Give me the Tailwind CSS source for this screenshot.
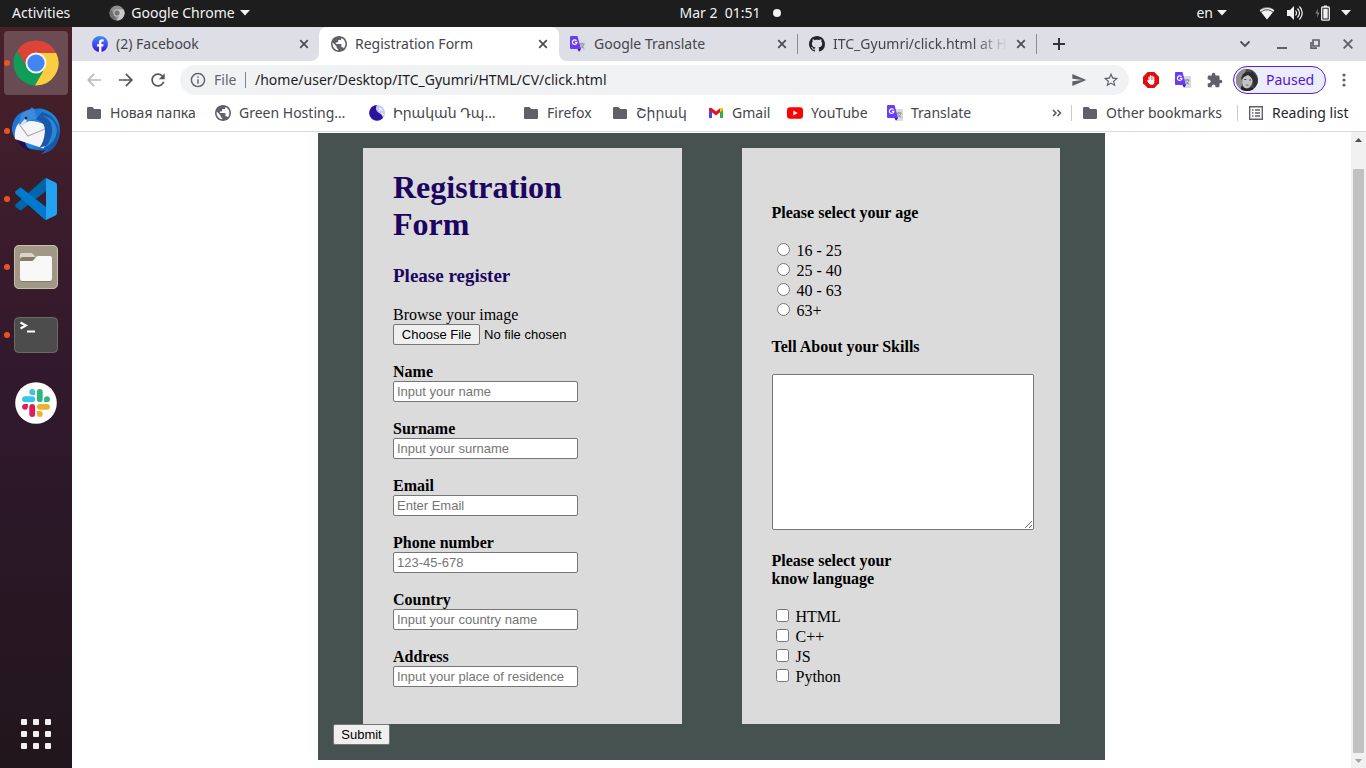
<!DOCTYPE html>
<html lang="en">
<head>
<meta charset="utf-8">
<meta name="viewport" content="width=device-width, initial-scale=1">
<title>Registration Form</title>
<script src="https://cdn.jsdelivr.net/npm/@tailwindcss/browser@4"></script>
</head>
<body class="min-h-screen flex flex-col bg-white font-['Noto_Sans','DejaVu_Sans',sans-serif] text-[14px] leading-5">

<!-- Shared icon shapes -->
<svg class="hidden" aria-hidden="true">
  <symbol id="i-globe" viewBox="2 2 20 20"><path fill="#5f6068" d="M12 2C6.480 2 2 6.480 2 12s4.480 10 10 10 10-4.480 10-10S17.520 2 12 2z"/><path fill="#fff" d="M11 19.930c-3.950-.49-7-3.850-7-7.930 0-.62.08-1.210.21-1.790L9 15v1c0 1.100.9 2 2 2v1.930zm6.900-2.540c-.26-.81-1-1.390-1.900-1.390h-1v-3c0-.55-.45-1-1-1H8v-2h2c.55 0 1-.45 1-1V7h2c1.100 0 2-.9 2-2v-.41c2.930 1.190 5 4.060 5 7.410 0 2.080-.8 3.970-2.100 5.390z"/></symbol>
  <symbol id="i-folder" viewBox="0 0 16 16"><path fill="#5f6068" d="M2.200 2H6.500L8.200 4H13.800A1.200 1.200 0 0 1 15 5.200V12.800A1.200 1.200 0 0 1 13.800 14H2.200A1.200 1.200 0 0 1 1 12.800V3.200A1.200 1.200 0 0 1 2.200 2z"/></symbol>
  <symbol id="i-translate" viewBox="0 0 16 16"><path fill="#d9dbe0" d="M6 4h9a1 1 0 0 1 1 1v10a1 1 0 0 1-1 1H9.500z"/><path d="M9.500 8h5M12 6.800V8M14 8c-.5 2-2 3.500-3.500 4.300M10.500 8.500c.7 1.700 2 3 3.700 3.800" stroke="#858a96" fill="none"/><path fill="#6a3df5" d="M1 0h6.500L11 13H1a1 1 0 0 1-1-1V1a1 1 0 0 1 1-1z"/><path fill="#3d08b8" d="M7.500 13H11l-2 2.800z"/><path d="M6.500 4.700A2.300 2.300 0 1 0 7 6.300H4.900" stroke="#fff" stroke-width="1.200" fill="none"/></symbol>
  <symbol id="i-x" viewBox="0 0 10 10"><path d="M1.200 1.200l7.600 7.600M8.800 1.200L1.200 8.800" stroke="#4b4c52" stroke-width="1.700"/></symbol>
  <symbol id="i-caret" viewBox="0 0 10 6"><path d="M0 0h10L5 5.500z" fill="#f2f2f2"/></symbol>
</svg>

<!-- Desktop top bar -->
<header class="h-[27px] shrink-0 pb-px bg-[#1d1d1d] text-[#f2f2f2] grid grid-cols-[1fr_auto_1fr] items-center">
  <div class="flex items-center pl-3">
    <button class="w-[97px] text-left">Activities</button>
    <button class="flex items-center">
      <svg class="size-4 mr-1.5" viewBox="0 0 16 16"><circle cx="8" cy="8" r="7.500" fill="#8f8f8f"/><path d="M8 4.500h6.700A7.500 7.500 0 0 1 7.600 15.500L11 9.800z" fill="#c9c9c9"/><path d="M1.700 4L5 9.700l2.600 5.800A7.500 7.500 0 0 1 1.700 4z" fill="#6f6f6f"/><circle cx="8" cy="8" r="3.500" fill="#d8d8d8"/><circle cx="8" cy="8" r="2.700" fill="#777"/></svg>
      <span class="min-w-[104px] whitespace-nowrap">Google Chrome</span>
      <svg class="w-2.5 h-1.5 ml-[5px]"><use href="#i-caret"/></svg>
    </button>
  </div>
  <button class="flex items-center gap-3 pl-[94px]"><span class="whitespace-pre min-w-[82px]">Mar 2  01:51</span><span class="size-2 rounded-full bg-[#f2f2f2]"></span></button>
  <div class="flex items-center justify-end pr-[15px]">
    <button class="flex items-center gap-1 mr-8"><span>en</span><svg class="w-2.5 h-1.5"><use href="#i-caret"/></svg></button>
    <button class="flex items-center" aria-label="System menu">
      <svg class="size-4 mr-3" viewBox="0 0 16 16"><path d="M8 14.500L.5 5C4.500 1 11.500 1 15.500 5z" fill="#777"/><path d="M8 14.500L.8 5.500C4.800 2 11.200 2 15.200 5.500z" fill="#f2f2f2"/><path d="M2 7.200c3.500-3.200 8.500-3.200 12 0" stroke="#1d1d1d" stroke-width=".8" fill="none"/></svg>
      <svg class="size-4 mr-3" viewBox="0 0 16 16"><path d="M0 5h3l4-4v14l-4-4H0z" fill="#f2f2f2"/><path d="M8.500 5.500q2 2.500 0 5M10.500 3.500q4 4.500 0 9M12.500 1.500q5.500 6.500 0 13" stroke="#f2f2f2" stroke-width="1.200" fill="none"/></svg>
      <svg class="size-4 mr-2.5" viewBox="0 0 16 16"><path d="M3 3.500L.5 8.500h2L2 13l2.500-5.500h-2z" fill="#888"/><path d="M9 .5h3V2H9z" fill="#f2f2f2"/><rect x="6.700" y="2" width="7.600" height="13.200" rx="1" fill="none" stroke="#f2f2f2" stroke-width="1.300"/><path d="M8.300 3.700h4.400v9.800H8.300z" fill="#f2f2f2"/></svg>
      <svg class="w-2.5 h-1.5"><use href="#i-caret"/></svg>
    </button>
  </div>
</header>

<div class="flex-1 flex min-w-0">

  <!-- Dock -->
  <nav class="w-[72px] shrink-0 bg-linear-to-b from-[#482028] via-[#30182d] to-[#21161b] flex flex-col justify-between pt-1 pb-0.5" aria-label="Dock">
    <div class="flex flex-col gap-1">
      <button aria-label="Google Chrome" class="relative mx-1 h-16 rounded bg-white/20 grid place-items-center">
        <i class="absolute left-0 top-[29px] size-1.5 rounded-full bg-[#e95420]"></i>
        <svg class="size-12" viewBox="0 0 48 48"><path d="M24 13.800H44.060A22.500 22.500 0 0 1 22.800 46.470L32.830 29.100z" fill="#fdcd40"/><path d="M15.170 29.100L5.140 11.730A22.500 22.500 0 0 1 44.060 13.800H24z" fill="#dc4437"/><path d="M32.830 29.100L22.800 46.470A22.500 22.500 0 0 1 5.140 11.730L15.170 29.100z" fill="#109d58"/><circle cx="24" cy="24" r="10.500" fill="#f2f2f2"/><circle cx="24" cy="24" r="8.600" fill="#4285f4"/></svg>
      </button>
      <button aria-label="Thunderbird" class="relative mx-1 h-16 grid place-items-center">
        <i class="absolute left-0 top-[29px] size-1.5 rounded-full bg-[#e95420]"></i>
        <svg class="size-12" viewBox="0 0 48 48"><defs><linearGradient id="tb" x1="0" y1="0" x2="1" y2="1"><stop offset="0" stop-color="#1b6cd1"/><stop offset=".6" stop-color="#1f8ae0"/><stop offset="1" stop-color="#183f9c"/></linearGradient></defs><path d="M10 5L17 3 20 0l2 2c10-3 26 5 26 21 0 12-7 22-19 24l5-4c-9 1-20-1-26-7C3 32 0 28 0 22c0-6 3-12 7-15z" fill="url(#tb)"/><path d="M4 31c3 8 9 12 15 13q-5-4-6-9z" fill="#23104f"/><path d="M7 16L13 15q8-3 21 3l-1 24L3 32C2 25 4 19 7 16z" fill="#f5f5f8"/><path d="M7 17l9 12 17-7" fill="none" stroke="#aaa" stroke-width="1.200"/><path d="M7 17L9 8q4-6 13-6l3 10q-6 0-10 3-4 3-8 2z" fill="#3f8bdb"/><path d="M9 16l4-4 2 2-4 5z" fill="#d5e4ef"/><circle cx="14" cy="11" r="1.300" fill="#16284c"/><path d="M24 12q9 3 9 12-1 12-6 17l6-2-3 5 6-3v4q11-5 11-21Q44 8 30 5z" fill="#1b58aa"/><path d="M30 9q11 3 10 17-2 10-8 15 12-5 13-18Q43 10 30 9z" fill="#2888d4"/></svg>
      </button>
      <button aria-label="Visual Studio Code" class="relative mx-1 h-16 grid place-items-center">
        <i class="absolute left-0 top-[29px] size-1.5 rounded-full bg-[#e95420]"></i>
        <svg class="size-12" viewBox="0 0 48 48"><path d="M34 3v13L9.500 35q-1 .8-2 0L3.700 32q-1.400-1.300 0-2.700L32 4q1-1 2-1z" fill="#0065a9"/><path d="M34 45V32L9.500 13q-1-.8-2 0L3.700 16q-1.400 1.300 0 2.700L32 44q1 1 2 1z" fill="#007acc"/><path d="M34 3l9.500 4.500Q45 8.200 45 10v28q0 1.800-1.500 2.500L34 45z" fill="#24a0f0"/></svg>
      </button>
      <button aria-label="Files" class="relative mx-1 h-16 grid place-items-center">
        <i class="absolute left-0 top-[29px] size-1.5 rounded-full bg-[#e95420]"></i>
        <svg class="size-12" viewBox="0 0 48 48"><rect x="2" y="2" width="44" height="44" rx="5" fill="#a09885"/><rect x="2.500" y="2.500" width="43" height="43" rx="4.500" fill="none" stroke="#c6bfae"/><path d="M8 20v-8q0-2 2-2h9q1.500 0 2.500 1.500L23.500 14H34v6z" fill="#dcd5c8"/><rect x="8" y="14" width="32" height="25" rx="2.500" fill="#857d6c"/><path d="M8 18h11.500q1.500 0 2.500-1.500L24 14q1-1 2.500-1H38q2 0 2 2v20.500q0 2.500-2 2.500H10q-2 0-2-2.500z" fill="#f8f8f6"/></svg>
      </button>
      <button aria-label="Terminal" class="relative mx-1 h-16 grid place-items-center">
        <i class="absolute left-0 top-[29px] size-1.5 rounded-full bg-[#e95420]"></i>
        <svg class="size-12" viewBox="0 0 48 48"><rect x="2.500" y="6.500" width="43" height="35" rx="4" fill="#4c4c4c" stroke="#6b6b68"/><path d="M8.500 11.500L14 14.500 8.500 17.500" fill="none" stroke="#fff" stroke-width="2"/><path d="M15 20.500h8" stroke="#fff" stroke-width="2"/></svg>
      </button>
      <button aria-label="Slack" class="relative mx-1 h-16 grid place-items-center">
        <svg class="size-12" viewBox="0 0 48 48"><circle cx="24" cy="24" r="20.800" fill="#fff"/><g stroke-linecap="round" stroke-width="5.800" fill="none"><path d="M13 20.200h7.200" stroke="#36c5f0"/><path d="M27.800 13v7.200" stroke="#2eb67d"/><path d="M27.800 27.800H35" stroke="#ecb22e"/><path d="M20.200 27.800V35" stroke="#e01e5a"/></g><path d="M23.100 15.900h-2.900A2.900 2.900 0 1 1 23.100 13z" fill="#36c5f0"/><path d="M32.100 23.100v-2.900A2.900 2.900 0 1 1 35 23.100z" fill="#2eb67d"/><path d="M24.900 32.100h2.900A2.900 2.900 0 1 1 24.900 35z" fill="#ecb22e"/><path d="M15.900 24.900v2.900A2.900 2.900 0 1 1 13 24.900z" fill="#e01e5a"/></svg>
      </button>
    </div>
    <button aria-label="Show applications" class="mx-1 h-16 grid grid-cols-[repeat(3,6px)] gap-1.5 place-content-center">
      <i class="size-1.5 rounded-[1px] bg-[#f2f0ef]"></i><i class="size-1.5 rounded-[1px] bg-[#f2f0ef]"></i><i class="size-1.5 rounded-[1px] bg-[#f2f0ef]"></i>
      <i class="size-1.5 rounded-[1px] bg-[#f2f0ef]"></i><i class="size-1.5 rounded-[1px] bg-[#f2f0ef]"></i><i class="size-1.5 rounded-[1px] bg-[#f2f0ef]"></i>
      <i class="size-1.5 rounded-[1px] bg-[#f2f0ef]"></i><i class="size-1.5 rounded-[1px] bg-[#f2f0ef]"></i><i class="size-1.5 rounded-[1px] bg-[#f2f0ef]"></i>
    </button>
  </nav>

  <!-- Browser window -->
  <div class="flex-1 min-w-0 flex flex-col text-[#45464c]">

    <!-- Tab strip -->
    <div class="h-[34px] shrink-0 flex items-stretch bg-white">
      <div class="flex-[0_1_247px] min-w-0 flex items-center gap-2 pl-5 pr-2.5 bg-[#dedee6] rounded-br-lg">
        <svg class="size-4 shrink-0" viewBox="0 0 16 16"><defs><linearGradient id="fb" x1="0" y1="0" x2="0" y2="1"><stop offset="0" stop-color="#3f8cff"/><stop offset="1" stop-color="#3b12e8"/></linearGradient></defs><circle cx="8" cy="8" r="8" fill="url(#fb)"/><path d="M7 16v-5.500H5V8.200h2V6.500C7 4.400 8.200 3.300 10 3.300l1.700.1v2h-1c-1 0-1.300.6-1.300 1.200v1.600h2.200l-.4 2.300H9.400V16z" fill="#fff"/></svg>
        <a href="#" class="flex-1 min-w-0 overflow-hidden whitespace-nowrap">(2) Facebook</a>
        <button aria-label="Close tab"><svg class="size-2.5"><use href="#i-x"/></svg></button>
      </div>
      <div class="flex-[0_1_240px] min-w-0 flex bg-[#dedee6]">
        <div class="flex-1 min-w-0 flex items-center gap-2 pl-3 pr-[11px] bg-white rounded-t-lg">
          <svg class="size-4 shrink-0"><use href="#i-globe"/></svg>
          <a href="#" class="flex-1 min-w-0 overflow-hidden whitespace-nowrap">Registration Form</a>
          <button aria-label="Close tab"><svg class="size-2.5"><use href="#i-x"/></svg></button>
        </div>
      </div>
      <div class="flex-1 min-w-0 flex items-center bg-[#dedee6] rounded-bl-lg">
        <div class="flex-[0_1_239px] min-w-0 h-5 flex items-center gap-2 pl-[11px] pr-2.5 border-r border-[#8b8c94]">
          <svg class="size-4 shrink-0"><use href="#i-translate"/></svg>
          <a href="#" class="flex-1 min-w-0 overflow-hidden whitespace-nowrap">Google Translate</a>
          <button aria-label="Close tab"><svg class="size-2.5"><use href="#i-x"/></svg></button>
        </div>
        <div class="flex-[0_1_239px] min-w-0 h-5 flex items-center gap-2 pl-[11px] pr-2.5 border-r border-[#8b8c94]">
          <svg class="size-4 shrink-0" viewBox="0 0 16 16"><path fill="#24252c" d="M8 0C3.580 0 0 3.580 0 8c0 3.540 2.290 6.530 5.470 7.590.4.070.55-.17.55-.38 0-.19-.01-.82-.01-1.490-2.010.37-2.530-.49-2.690-.94-.09-.23-.48-.94-.82-1.130-.28-.15-.68-.52-.01-.53.63-.01 1.080.58 1.230.82.72 1.210 1.870.87 2.330.66.070-.52.28-.87.51-1.070-1.780-.2-3.640-.89-3.640-3.950 0-.87.31-1.590.82-2.150-.08-.2-.36-1.020.08-2.120 0 0 .67-.21 2.200.82.64-.18 1.320-.27 2-.27.68 0 1.360.09 2 .27 1.530-1.040 2.200-.82 2.200-.82.44 1.100.16 1.920.08 2.120.51.56.82 1.270.82 2.150 0 3.070-1.870 3.750-3.650 3.950.29.25.54.73.54 1.480 0 1.070-.01 1.930-.01 2.200 0 .21.15.46.55.38A8.013 8.013 0 0 0 16 8c0-4.420-3.580-8-8-8z"/></svg>
          <a href="#" class="flex-1 min-w-0 overflow-hidden whitespace-nowrap mask-r-from-80% mask-r-to-100%">ITC_Gyumri/click.html at H</a>
          <button aria-label="Close tab"><svg class="size-2.5"><use href="#i-x"/></svg></button>
        </div>
        <button aria-label="New tab" class="ml-4"><svg class="size-3" viewBox="0 0 12 12"><path d="M6 0v12M0 6h12" stroke="#33343a" stroke-width="2"/></svg></button>
        <div class="ml-auto flex items-center gap-[23px] pr-[13px]">
          <button aria-label="Search tabs"><svg class="size-2.5" viewBox="0 0 10 10"><path d="M.5 2.500L5 7l4.500-4.500" fill="none" stroke="#4b4c52" stroke-width="1.800"/></svg></button>
          <button aria-label="Minimize" class="ml-1"><svg class="size-2.5" viewBox="0 0 10 10"><path d="M0 9h10" stroke="#5f6068" stroke-width="2"/></svg></button>
          <button aria-label="Restore"><svg class="size-2.5" viewBox="0 0 10 10"><path d="M3 1h6v6H3zM1 3v6.200H7" fill="none" stroke="#5f6068" stroke-width="1.700"/></svg></button>
          <button aria-label="Close window"><svg class="size-2.5" viewBox="0 0 10 10"><path d="M.7.7l8.600 8.600M9.300.7L.7 9.300" stroke="#5f6068" stroke-width="1.900"/></svg></button>
        </div>
      </div>
    </div>

    <!-- Address bar -->
    <div class="h-[38px] shrink-0 flex items-center pl-3 pr-4">
      <button aria-label="Back" class="mr-3"><svg class="size-5" viewBox="0 0 24 24"><path fill="#b9babf" d="M20.500 11H7.330l5.590-5.590L11.500 4l-8 8 8 8 1.410-1.410L7.330 13H20.500v-2z"/></svg></button>
      <button aria-label="Forward" class="mr-3"><svg class="size-5" viewBox="0 0 24 24"><path fill="#55565c" d="M3.500 11h13.170l-5.590-5.590L12.500 4l8 8-8 8-1.410-1.410L16.670 13H3.500v-2z"/></svg></button>
      <button aria-label="Reload" class="mr-3"><svg class="size-5" viewBox="0 0 24 24"><path fill="#55565c" d="M17.650 6.350C16.200 4.900 14.210 4 12 4c-4.420 0-7.990 3.580-7.990 8s3.570 8 7.990 8c3.730 0 6.840-2.550 7.730-6h-2.080c-.82 2.330-3.040 4-5.650 4-3.310 0-6-2.690-6-6s2.690-6 6-6c1.660 0 3.140.69 4.220 1.780L13 11h7V4l-2.350 2.350z"/></svg></button>
      <div class="flex-1 min-w-0 h-[30px] rounded-full bg-[#f1f2f4] flex items-center pl-2.5 pr-2.5">
        <svg class="size-4 shrink-0 mr-2" viewBox="1 1 22 22"><path fill="#5f6068" d="M11 7h2v2h-2zm0 4h2v6h-2zm1-9C6.480 2 2 6.480 2 12s4.480 10 10 10 10-4.480 10-10S17.520 2 12 2zm0 18c-4.410 0-8-3.590-8-8s3.590-8 8-8 8 3.590 8 8-3.590 8-8 8z"/></svg>
        <label for="url" class="w-[31px] text-[#63646c]">File</label>
        <span class="h-4 w-px bg-[#85868c] mr-[9px]"></span>
        <input id="url" type="text" value="/home/user/Desktop/ITC_Gyumri/HTML/CV/click.html" class="flex-1 min-w-0 bg-transparent text-[#1d1d26] outline-none">
        <button aria-label="Share" class="mr-4"><svg class="size-4" viewBox="0 0 24 24"><path fill="#5f6068" d="M2 21l21-9L2 3v7l15 2-15 2z"/></svg></button>
        <button aria-label="Bookmark"><svg class="size-4" viewBox="1 1 22 22"><path fill="#5f6068" d="M22 9.240l-7.190-.62L12 2 9.190 8.630 2 9.240l5.460 4.730L5.820 21 12 17.270 18.180 21l-1.630-7.030L22 9.240zM12 15.400l-3.760 2.270 1-4.280-3.320-2.880 4.380-.38L12 6.100l1.710 4.040 4.380.38-3.320 2.880 1 4.280L12 15.400z"/></svg></button>
      </div>
      <button aria-label="AdBlock" class="ml-3.5"><svg class="size-4" viewBox="0 0 16 16"><path fill="#e40d0d" d="M4.700 0h6.600L16 4.700v6.600L11.300 16H4.700L0 11.300V4.700z"/><path d="M4.700 8.700L6 10.500V5M7.500 8V3.500M9.100 8V4M10.700 8.500V5" stroke="#fff" stroke-width="1.200" stroke-linecap="round" fill="none"/><path d="M5.500 8h5.800v2q0 3-2.800 3-2 0-3.500-3z" fill="#fff"/></svg></button>
      <button aria-label="Translate" class="ml-4"><svg class="size-4"><use href="#i-translate"/></svg></button>
      <button aria-label="Extensions" class="ml-4"><svg class="size-4" viewBox="1 0 23 23"><path fill="#5f6068" d="M20.500 11H19V7c0-1.100-.9-2-2-2h-4V3.500C13 2.120 11.880 1 10.500 1S8 2.120 8 3.500V5H4c-1.100 0-1.990.9-1.990 2v3.800H3.500c1.490 0 2.700 1.210 2.700 2.700s-1.210 2.700-2.700 2.700H2V20c0 1.100.9 2 2 2h3.800v-1.500c0-1.490 1.210-2.700 2.700-2.700 1.490 0 2.700 1.210 2.700 2.700V22H17c1.100 0 2-.9 2-2v-4h1.500c1.380 0 2.500-1.120 2.500-2.500S21.880 11 20.500 11z"/></svg></button>
      <button class="ml-2.5 h-7 w-[93px] rounded-full border border-[#5a1fe0] bg-[#ecedfb] text-[#5313d8] flex items-center pl-0.5">
        <svg class="size-[22px] mr-2" viewBox="0 0 22 22"><defs><clipPath id="av"><circle cx="11" cy="11" r="11"/></clipPath></defs><g clip-path="url(#av)"><path d="M0 0h22v22H0z" fill="#4b4b4b"/><path d="M0 4q5-5 10-4L5 22H0z" fill="#8e8e8e"/><path d="M15 2q7 4 7 12l-4 6z" fill="#303030"/><ellipse cx="11.500" cy="12" rx="5" ry="7.500" fill="#c4c4c4" transform="rotate(12 11.500 12)"/><path d="M5 11Q6 2 13 3q6 1 5 11-2-6-6-8-4 1-7 5z" fill="#2b2b2b"/><path d="M8.300 10.500h2M13 11h2" stroke="#444"/><path d="M10 16h2.500" stroke="#666"/><path d="M5 17q6 5 11 1l3 4H5z" fill="#222"/></g></svg>
        <span>Paused</span>
      </button>
      <button aria-label="Menu" class="ml-3"><svg class="w-3 h-4" viewBox="0 0 12 16"><g fill="#5f6068"><circle cx="6" cy="3" r="1.600"/><circle cx="6" cy="8" r="1.600"/><circle cx="6" cy="13" r="1.600"/></g></svg></button>
    </div>

    <!-- Bookmarks bar -->
    <div class="h-[33px] shrink-0 flex items-center pb-1 pl-3.5 pr-3.5 border-b border-[#d9dadd] whitespace-nowrap">
      <div class="flex-1 min-w-0 flex items-center overflow-hidden">
        <a href="#" class="flex items-center gap-2 w-[129px] shrink-0"><svg class="size-4"><use href="#i-folder"/></svg>Новая папка</a>
        <a href="#" class="flex items-center gap-2 w-[154px] shrink-0"><svg class="size-4"><use href="#i-globe"/></svg>Green Hosting…</a>
        <a href="#" class="flex items-center gap-2 w-[154px] shrink-0"><svg class="size-4" viewBox="0 0 16 16"><circle cx="8" cy="8" r="8" fill="#c3c9ef"/><path d="M8 0a8 8 0 0 0-5 14q6 4 11-1-1-4-4-5Q5 5 8 0z" fill="#2c12a0"/><path d="M10 3l4 3M12 8l3 2M10 6l2-3" stroke="#fff"/></svg>Իրական Դպ…</a>
        <a href="#" class="flex items-center gap-2 w-[89px] shrink-0"><svg class="size-4"><use href="#i-folder"/></svg>Firefox</a>
        <a href="#" class="flex items-center gap-2 w-[96px] shrink-0"><svg class="size-4"><use href="#i-folder"/></svg>Շիրակ</a>
        <a href="#" class="flex items-center gap-2 w-[79px] shrink-0"><svg class="size-4" viewBox="0 0 16 16"><path d="M1 3v10h3V6z" fill="#5b3df0"/><path d="M12 6v7h3V3z" fill="#2fae4e"/><path d="M1 3.500Q2.500 2 4 3.200L8 6.500l4-3.300v4L8 10.500 1 5z" fill="#e3131b"/><path d="M12 3.200Q14 2 15 3.500V5l-3 2.300z" fill="#fbc60c"/></svg>Gmail</a>
        <a href="#" class="flex items-center gap-2 w-[100px] shrink-0"><svg class="size-4" viewBox="0 0 16 16"><rect y="2.300" width="16" height="11.400" rx="3" fill="#f00"/><path d="M6.300 5.500v5L10.700 8z" fill="#fff"/></svg>YouTube</a>
        <a href="#" class="flex items-center gap-2 w-[89px] shrink-0"><svg class="size-4"><use href="#i-translate"/></svg>Translate</a>
      </div>
      <button aria-label="More bookmarks" class="mr-2"><svg class="size-3" viewBox="0 0 12 12"><path d="M2 3l3 3-3 3M6.500 3l3 3-3 3" fill="none" stroke="#55565c" stroke-width="1.500"/></svg></button>
      <a href="#" class="flex items-center gap-2 h-4 border-l border-[#c9cacf] pl-2.5 w-[166px]"><svg class="size-4"><use href="#i-folder"/></svg>Other bookmarks</a>
      <a href="#" class="flex items-center gap-2 h-4 border-l border-[#c9cacf] pl-2.5 w-[115px] text-[#25262c]"><svg class="size-4" viewBox="0 0 16 16"><path d="M1.700 1.700h12.600v12.600H1.700z" fill="none" stroke="#5f6068" stroke-width="1.400"/><path d="M4 5h1.500M4 8h1.500M4 11h1.500M7 5h5M7 8h5M7 11h5" stroke="#5f6068" stroke-width="1.400"/></svg>Reading list</a>
    </div>

    <!-- Page viewport -->
    <div class="flex-1 flex min-w-0">
      <main class="flex-1 min-w-0 pt-px pb-2 font-['Liberation_Serif',serif] text-[16px] leading-[18px] text-black">
        <form class="w-full max-w-[787px] mx-auto bg-[#455250] p-[15px]" onsubmit="return false">
          <div class="mx-[30px] grid grid-cols-2 gap-[60px]">

            <section class="min-w-0 bg-[#dbdbdb] px-[30px] pt-[21px] pb-[37px]">
              <h1 class="w-[185px] text-[32px] leading-[37px] font-bold text-[#1b0560]">Registration Form</h1>
              <h2 class="mt-[22px] text-[19px] leading-[21px] font-bold text-[#1b0560]">Please register</h2>
              <div class="mt-5 flex flex-col gap-[18px]">
                <div class="flex flex-col items-start">
                  <label for="photo">Browse your image</label>
                  <input id="photo" type="file" class="w-[230px] h-[21px] font-['Liberation_Sans',sans-serif] text-[13px] leading-[15px] file:h-[21px] file:w-[87px] file:mr-1 file:rounded-[2px] file:border file:border-solid file:border-[#767676] file:bg-[#efefef] file:text-black">
                </div>
                <div class="flex flex-col items-start">
                  <label for="name" class="font-bold">Name</label>
                  <input id="name" type="text" placeholder="Input your name" class="w-[185px] h-[21px] px-[3px] rounded-[2px] border border-[#767676] bg-white font-['Liberation_Sans',sans-serif] text-[13px] leading-[15px] placeholder:text-[#757575]">
                </div>
                <div class="flex flex-col items-start">
                  <label for="surname" class="font-bold">Surname</label>
                  <input id="surname" type="text" placeholder="Input your surname" class="w-[185px] h-[21px] px-[3px] rounded-[2px] border border-[#767676] bg-white font-['Liberation_Sans',sans-serif] text-[13px] leading-[15px] placeholder:text-[#757575]">
                </div>
                <div class="flex flex-col items-start">
                  <label for="email" class="font-bold">Email</label>
                  <input id="email" type="email" placeholder="Enter Email" class="w-[185px] h-[21px] px-[3px] rounded-[2px] border border-[#767676] bg-white font-['Liberation_Sans',sans-serif] text-[13px] leading-[15px] placeholder:text-[#757575]">
                </div>
                <div class="flex flex-col items-start">
                  <label for="phone" class="font-bold">Phone number</label>
                  <input id="phone" type="tel" placeholder="123-45-678" class="w-[185px] h-[21px] px-[3px] rounded-[2px] border border-[#767676] bg-white font-['Liberation_Sans',sans-serif] text-[13px] leading-[15px] placeholder:text-[#757575]">
                </div>
                <div class="flex flex-col items-start">
                  <label for="country" class="font-bold">Country</label>
                  <input id="country" type="text" placeholder="Input your country name" class="w-[185px] h-[21px] px-[3px] rounded-[2px] border border-[#767676] bg-white font-['Liberation_Sans',sans-serif] text-[13px] leading-[15px] placeholder:text-[#757575]">
                </div>
                <div class="flex flex-col items-start">
                  <label for="address" class="font-bold">Address</label>
                  <input id="address" type="text" placeholder="Input your place of residence" class="w-[185px] h-[21px] px-[3px] rounded-[2px] border border-[#767676] bg-white font-['Liberation_Sans',sans-serif] text-[13px] leading-[15px] placeholder:text-[#757575]">
                </div>
              </div>
            </section>

            <section class="min-w-0 bg-[#dbdbdb] pl-[30px] pr-[26px] pt-14">
              <fieldset>
                <legend class="font-bold mb-[19px]">Please select your age</legend>
                <div class="flex flex-col pl-[5px]">
                  <label class="flex items-center gap-[7px] h-5"><input type="radio" name="age" class="size-[13px] mb-1">16 - 25</label>
                  <label class="flex items-center gap-[7px] h-5"><input type="radio" name="age" class="size-[13px] mb-1">25 - 40</label>
                  <label class="flex items-center gap-[7px] h-5"><input type="radio" name="age" class="size-[13px] mb-1">40 - 63</label>
                  <label class="flex items-center gap-[7px] h-5"><input type="radio" name="age" class="size-[13px] mb-1">63+</label>
                </div>
              </fieldset>
              <label for="skills" class="block mt-[17px] font-bold">Tell About your Skills</label>
              <textarea id="skills" class="block mt-[18px] w-full h-[156px] p-0.5 rounded-[2px] border border-[#767676] bg-white resize font-['Liberation_Mono',monospace] text-[13px]"></textarea>
              <fieldset class="mt-[22px]">
                <legend class="w-[150px] font-bold mb-[19px]">Please select your know language</legend>
                <div class="flex flex-col pl-1">
                  <label class="flex items-center gap-[7px] h-5"><input type="checkbox" class="size-[13px] mb-1">HTML</label>
                  <label class="flex items-center gap-[7px] h-5"><input type="checkbox" class="size-[13px] mb-1">C++</label>
                  <label class="flex items-center gap-[7px] h-5"><input type="checkbox" class="size-[13px] mb-1">JS</label>
                  <label class="flex items-center gap-[7px] h-5"><input type="checkbox" class="size-[13px] mb-1">Python</label>
                </div>
              </fieldset>
            </section>
          </div>
          <button type="submit" class="block h-[21px] w-[57px] rounded-[2px] border border-[#767676] bg-[#efefef] font-['Liberation_Sans',sans-serif] text-[13px] leading-[15px]">Submit</button>
        </form>
      </main>
      <!-- Scrollbar -->
      <div class="w-[15px] shrink-0 bg-[#f1f1f1] flex flex-col items-center" aria-hidden="true">
        <svg class="w-[7px] h-4" viewBox="0 0 7 16"><path d="M0 10l3.500-4L7 10z" fill="#505050"/></svg>
        <div class="flex-1 w-[11px] mt-[21px] bg-[#c1c1c1]"></div>
        <svg class="w-[7px] h-[15px]" viewBox="0 0 7 15"><path d="M0 6l3.500 4L7 6z" fill="#a3a3a3"/></svg>
      </div>
    </div>
  </div>
</div>
</body>
</html>
